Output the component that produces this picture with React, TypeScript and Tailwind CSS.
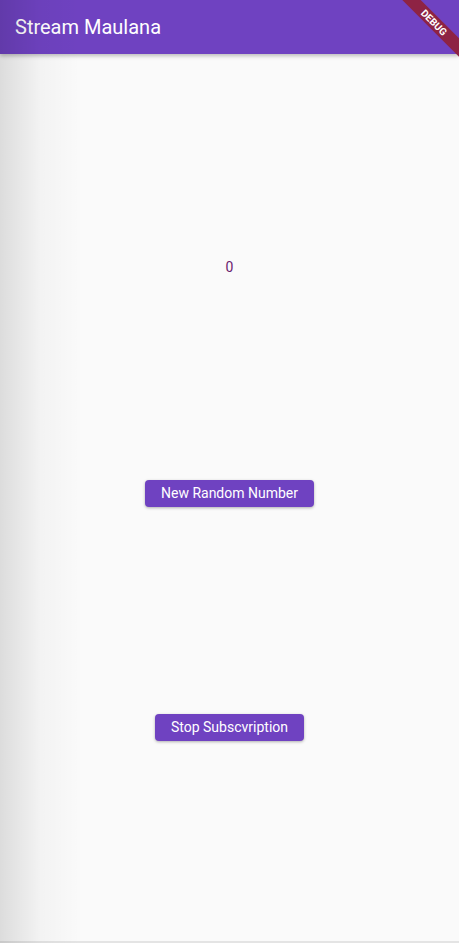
export default function App() {
  return (
    <div
      className="relative h-[943px] w-[459px] overflow-hidden bg-[#fafafa]"
      style={{ fontFamily: "Roboto, 'Liberation Sans', sans-serif" }}
    >
      <header className="relative z-10 flex h-[54px] items-center bg-[#6f42c1] px-[15px] shadow-[0_2px_4px_rgba(0,0,0,0.25)]">
        <h1 className="text-[20px] font-normal text-white">Stream Maulana</h1>
      </header>

      <main className="flex h-[887px] flex-col items-center">
        <span className="mt-[205px] text-[14px] leading-4 text-[#6a1b6e]">0</span>
        <button
          type="button"
          className="mt-[205px] h-[27px] rounded-[4px] bg-[#6f42c1] px-4 text-[14px] font-normal text-white shadow-[0_1px_3px_rgba(0,0,0,0.3)]"
        >
          New Random Number
        </button>
        <button
          type="button"
          className="mt-[207px] h-[27px] rounded-[4px] bg-[#6f42c1] px-4 text-[14px] font-normal text-white shadow-[0_1px_3px_rgba(0,0,0,0.3)]"
        >
          Stop Subscvription
        </button>
      </main>
      <div className="h-[2px] bg-[#e4e4e4]" />

      {/* left edge shade */}
      <div className="pointer-events-none absolute inset-y-0 left-0 z-20 w-[80px] bg-gradient-to-r from-black/[0.12] via-black/[0.03] to-transparent" />

      {/* debug banner */}
      <div className="absolute right-[-30px] top-[16px] z-30 w-[110px] rotate-45 bg-[#8e2344] text-center text-[10px] font-bold leading-[13px] text-white">
        DEBUG
      </div>
    </div>
  );
}
